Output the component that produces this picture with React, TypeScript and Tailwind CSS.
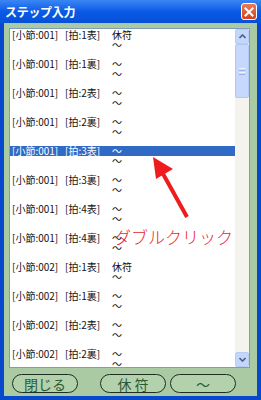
import React from 'react';

const rows = [
  { bar: '001', beat: '1表', note: '休符' },
  { bar: '001', beat: '1裏', note: '〜' },
  { bar: '001', beat: '2表', note: '〜' },
  { bar: '001', beat: '2裏', note: '〜' },
  { bar: '001', beat: '3表', note: '〜', selected: true },
  { bar: '001', beat: '3裏', note: '〜' },
  { bar: '001', beat: '4表', note: '〜' },
  { bar: '001', beat: '4裏', note: '〜' },
  { bar: '002', beat: '1表', note: '休符' },
  { bar: '002', beat: '1裏', note: '〜' },
  { bar: '002', beat: '2表', note: '〜' },
  { bar: '002', beat: '2裏', note: '〜' },
];

const font = { fontFamily: '"MS UI Gothic", "Noto Sans CJK JP", sans-serif' };

function PillButton({ label, className }: { label: string; className: string }) {
  return (
    <button
      className={`h-[19px] rounded-full border-[1.5px] border-[#1f2d22] bg-[#b3d2ac] text-[14px] leading-none text-[#2c5a36] ${className}`}
      style={font}
    >
      {label}
    </button>
  );
}

export default function App() {
  return (
    <div className="relative h-[400px] w-[261px] overflow-hidden bg-[#0848cc]" style={font}>
      {/* title bar */}
      <div className="flex h-[23px] items-center justify-between bg-gradient-to-b from-[#3a86f4] via-[#0a5ae6] to-[#0650d8] pl-[5px] pr-[4px]">
        <span className="text-[12px] font-bold text-white tracking-tight">ステップ入力</span>
        <div className="flex h-[17px] w-[16px] items-center justify-center rounded-[3px] border border-white bg-gradient-to-b from-[#ec7a56] to-[#d3401a]">
          <svg width="10" height="10" viewBox="0 0 10 10">
            <path d="M1.5 1.5 L8.5 8.5 M8.5 1.5 L1.5 8.5" stroke="white" strokeWidth="2" strokeLinecap="square" />
          </svg>
        </div>
      </div>

      {/* body */}
      <div className="mx-[4px] flex h-[373px] flex-col bg-[#a9caa3] pt-[5px]">
        <div className="ml-[5px] flex h-[340px] w-[241px] border border-[#7f9db9] bg-white">
          <div className="flex-1 overflow-hidden pt-[1px]">
            {rows.map((r, i) => (
              <div key={i} className="h-[29px] text-[10px] leading-[10px] text-[#111]">
                <div className={`flex pl-[2px] ${r.selected ? 'bg-[#316ac5] text-white' : ''}`}>
                  <span className="w-[53px]">[小節:{r.bar}]</span>
                  <span className="w-[47px]">[拍:{r.beat}]</span>
                  <span>{r.note}</span>
                </div>
                <div className="pl-[102px]">〜</div>
              </div>
            ))}
          </div>
          {/* scrollbar */}
          <div className="flex w-[14px] flex-col bg-[#f4f3ee]">
            <div className="flex h-[15px] items-center justify-center rounded-[2px] border border-[#b8cdf5] bg-[#c4d6fb]">
              <svg width="7" height="5" viewBox="0 0 7 5">
                <path d="M0.5 4 L3.5 1 L6.5 4" fill="none" stroke="#4d6185" strokeWidth="1.6" />
              </svg>
            </div>
            <div className="flex h-[54px] flex-col items-center justify-center gap-[1px] rounded-[2px] border border-[#b0c8f4] bg-[#c6d8fc]">
              <div className="h-[1px] w-[6px] bg-[#eef3fe]" />
              <div className="h-[1px] w-[6px] bg-[#9db5e6]" />
              <div className="h-[1px] w-[6px] bg-[#eef3fe]" />
              <div className="h-[1px] w-[6px] bg-[#9db5e6]" />
            </div>
            <div className="flex-1" />
            <div className="flex h-[15px] items-center justify-center rounded-[2px] border border-[#b8cdf5] bg-[#c4d6fb]">
              <svg width="7" height="5" viewBox="0 0 7 5">
                <path d="M0.5 1 L3.5 4 L6.5 1" fill="none" stroke="#4d6185" strokeWidth="1.6" />
              </svg>
            </div>
          </div>
        </div>

        <div className="flex items-center pl-[8px] pt-[6px]">
          <PillButton label="閉じる" className="w-[66px]" />
          <PillButton label="休 符" className="ml-[22px] w-[66px]" />
          <PillButton label="〜" className="ml-[4px] w-[66px]" />
        </div>
      </div>

      {/* annotation overlay */}
      <svg className="absolute left-0 top-0" width="261" height="400" viewBox="0 0 261 400">
        <line x1="187" y1="217" x2="162" y2="172" stroke="#ee1c1c" strokeWidth="4" />
        <polygon points="153,157 173,169 156,179" fill="#ee1c1c" />
      </svg>
      <div className="absolute left-[114px] top-[228px] text-[17px] font-light leading-none text-[#e8262c]">
        ダブルクリック
      </div>
    </div>
  );
}
